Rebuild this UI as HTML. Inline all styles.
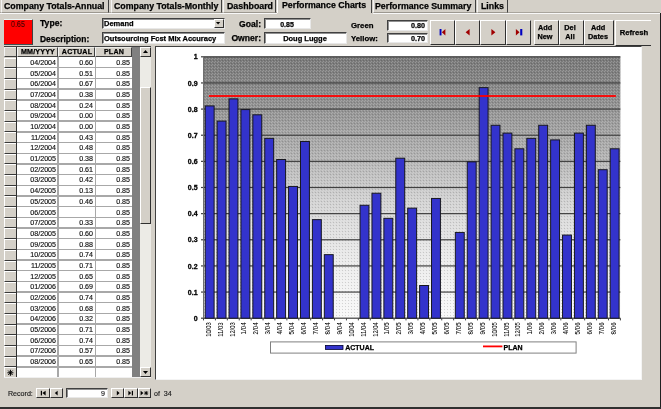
<!DOCTYPE html><html><head><meta charset="utf-8"><style>
*{margin:0;padding:0;box-sizing:border-box}
html,body{width:661px;height:409px;overflow:hidden;background:#d4d0c8;font-family:"Liberation Sans", sans-serif;position:relative}
.a{position:absolute}
.t{position:absolute;white-space:nowrap;line-height:1;will-change:transform}
.b{font-weight:bold;-webkit-text-stroke:0.25px currentColor}
.n{-webkit-text-stroke:0.15px currentColor}
</style></head><body>

<div class="a" style="left:0px;top:13.0px;width:659.5px;height:1px;background:#f8f8f8"></div>
<div class="a" style="left:0px;top:12.2px;width:659.5px;height:0.8px;background:#a8a49c"></div>
<div class="a" style="left:1px;top:0px;width:108px;height:13.0px;background:#d4d0c8;border-left:1px solid #f4f4f4;border-right:1.3px solid #404040;border-bottom:1px solid #9c9890"></div>
<div class="t b" style="left:3.7px;top:2.3px;font-size:8.8px;color:#000;">Company Totals-Annual</div>
<div class="a" style="left:110.5px;top:0px;width:111.0px;height:13.0px;background:#d4d0c8;border-left:1px solid #f4f4f4;border-right:1.3px solid #404040;border-bottom:1px solid #9c9890"></div>
<div class="t b" style="left:113.6px;top:2.3px;font-size:8.8px;color:#000;">Company Totals-Monthly</div>
<div class="a" style="left:223px;top:0px;width:53px;height:13.0px;background:#d4d0c8;border-left:1px solid #f4f4f4;border-right:1.3px solid #404040;border-bottom:1px solid #9c9890"></div>
<div class="t b" style="left:226.7px;top:2.3px;font-size:8.8px;color:#000;">Dashboard</div>
<div class="a" style="left:276.5px;top:0px;width:96.0px;height:14.0px;background:#d4d0c8"></div>
<div class="a" style="left:276.5px;top:0px;width:1px;height:13px;background:#fff"></div>
<div class="a" style="left:371.3px;top:0px;width:1.2px;height:13px;background:#404040"></div>
<div class="t b" style="left:281.8px;top:1.2px;font-size:8.8px;color:#000;">Performance Charts</div>
<div class="a" style="left:372.5px;top:0px;width:103.5px;height:13.0px;background:#d4d0c8;border-left:1px solid #f4f4f4;border-right:1.3px solid #404040;border-bottom:1px solid #9c9890"></div>
<div class="t b" style="left:375.1px;top:2.3px;font-size:8.8px;color:#000;">Performance Summary</div>
<div class="a" style="left:477px;top:0px;width:31px;height:13.0px;background:#d4d0c8;border-left:1px solid #f4f4f4;border-right:1.3px solid #404040;border-bottom:1px solid #9c9890"></div>
<div class="t b" style="left:480.7px;top:2.3px;font-size:8.8px;color:#000;">Links</div>
<div class="a" style="left:659.5px;top:13px;width:1.5px;height:396px;background:#202020"></div>
<div class="a" style="left:0px;top:406.8px;width:661px;height:2.2px;background:#303030"></div>
<div class="a" style="left:3.5px;top:19px;width:29.5px;height:25.5px;background:#ff0000;border-top:1px solid #e8f4f4;border-right:1.5px solid #404040;border-bottom:1px solid #405050"></div>
<div class="t n" style="left:-82.1px;width:200px;text-align:center;top:19.2px;font-size:9.8px;color:#400000;transform:scaleX(0.73);transform-origin:100px 0">0.65</div>
<div class="t b" style="left:40px;top:19.4px;font-size:8.6px;color:#000;">Type:</div>
<div class="t b" style="left:40px;top:34.7px;font-size:8.45px;color:#000;">Description:</div>
<div class="a" style="left:102px;top:18px;width:122.5px;height:10.5px;background:#fff;border-top:1px solid #404040;border-left:1px solid #404040;border-right:1px solid #e8e8e8;border-bottom:1px solid #e8e8e8;box-shadow:inset 1px 1px 0 #909090"></div>
<div class="a" style="left:213.7px;top:19px;width:10.3px;height:9px;background:#d4d0c8;border-top:1px solid #fff;border-left:1px solid #fff;border-right:1.2px solid #303030;border-bottom:1.2px solid #303030"></div>
<svg class="a" style="left:216.4px;top:21.8px" width="5" height="3"><polygon points="0,0 4.2,0 2.1,2.4" fill="#000"/></svg>
<div class="t b" style="left:103.6px;top:20.4px;font-size:7.5px;color:#000;">Demand</div>
<div class="a" style="left:102px;top:32px;width:122.5px;height:11.5px;background:#fff;border-top:1px solid #404040;border-left:1px solid #404040;border-right:1px solid #e8e8e8;border-bottom:1px solid #e8e8e8;box-shadow:inset 1px 1px 0 #909090"></div>
<div class="t b" style="left:103.5px;top:34.8px;font-size:7.5px;color:#000;">Outsourcing Fcst Mix Accuracy</div>
<div class="t b" style="left:61.30000000000001px;width:200px;text-align:right;top:20.3px;font-size:8.6px;color:#000;">Goal:</div>
<div class="t b" style="left:61.30000000000001px;width:200px;text-align:right;top:34.3px;font-size:8.6px;color:#000;">Owner:</div>
<div class="a" style="left:264px;top:18px;width:47px;height:11.4px;background:#fff;border-top:1px solid #404040;border-left:1px solid #404040;border-right:1px solid #e8e8e8;border-bottom:1px solid #e8e8e8;box-shadow:inset 1px 1px 0 #909090"></div>
<div class="t b" style="left:187.3px;width:200px;text-align:center;top:21.0px;font-size:7px;color:#000;">0.85</div>
<div class="a" style="left:264px;top:32px;width:83px;height:12px;background:#fff;border-top:1px solid #404040;border-left:1px solid #404040;border-right:1px solid #e8e8e8;border-bottom:1px solid #e8e8e8;box-shadow:inset 1px 1px 0 #909090"></div>
<div class="t b" style="left:204.8px;width:200px;text-align:center;top:34.8px;font-size:7.5px;color:#000;">Doug Lugge</div>
<div class="t b" style="left:350.9px;top:22.0px;font-size:7.8px;color:#000;">Green</div>
<div class="t b" style="left:350.9px;top:34.8px;font-size:7.8px;color:#000;">Yellow:</div>
<div class="a" style="left:387px;top:20px;width:40.6px;height:10.6px;background:#fff;border-top:1px solid #404040;border-left:1px solid #404040;border-right:1px solid #e8e8e8;border-bottom:1px solid #e8e8e8;box-shadow:inset 1px 1px 0 #909090"></div>
<div class="t b" style="left:224.8px;width:200px;text-align:right;top:21.6px;font-size:7.2px;color:#000;">0.80</div>
<div class="a" style="left:387px;top:33.4px;width:40.6px;height:10.1px;background:#fff;border-top:1px solid #404040;border-left:1px solid #404040;border-right:1px solid #e8e8e8;border-bottom:1px solid #e8e8e8;box-shadow:inset 1px 1px 0 #909090"></div>
<div class="t b" style="left:224.8px;width:200px;text-align:right;top:34.5px;font-size:7.2px;color:#000;">0.70</div>
<div class="a" style="left:430px;top:20px;width:24.5px;height:24.5px;background:#d4d0c8;border-top:1px solid #fff;border-left:1px solid #fff;border-right:1.3px solid #303030;border-bottom:1.3px solid #303030"></div>
<div class="a" style="left:454.5px;top:20px;width:25.5px;height:24.5px;background:#d4d0c8;border-top:1px solid #fff;border-left:1px solid #fff;border-right:1.3px solid #303030;border-bottom:1.3px solid #303030"></div>
<div class="a" style="left:480px;top:20px;width:25.5px;height:24.5px;background:#d4d0c8;border-top:1px solid #fff;border-left:1px solid #fff;border-right:1.3px solid #303030;border-bottom:1.3px solid #303030"></div>
<div class="a" style="left:505.5px;top:20px;width:25.200000000000045px;height:24.5px;background:#d4d0c8;border-top:1px solid #fff;border-left:1px solid #fff;border-right:1.3px solid #303030;border-bottom:1.3px solid #303030"></div>
<svg class="a" style="left:430px;top:20px" width="101" height="25"><rect x="9.6" y="9" width="1.9" height="6.4" fill="#0000c0"/><polygon points="11.8,12.2 15.4,9 15.4,15.4" fill="#a00000"/><polygon points="35.6,12.2 39.6,9 39.6,15.4" fill="#a00000"/><polygon points="65.4,12.2 61.4,9 61.4,15.4" fill="#a00000"/><polygon points="89.5,12.2 85.9,9 85.9,15.4" fill="#a00000"/><rect x="90.2" y="9" width="2.1" height="6.4" fill="#0000c0"/></svg>
<div class="a" style="left:533.5px;top:20px;width:25.0px;height:24.5px;background:#d4d0c8;border-top:1px solid #fff;border-left:1px solid #fff;border-right:1.3px solid #303030;border-bottom:1.3px solid #303030"></div>
<div class="t b" style="left:445.1px;width:200px;text-align:center;top:24.0px;font-size:7.3px;color:#000;">Add</div>
<div class="t b" style="left:445.1px;width:200px;text-align:center;top:33.4px;font-size:7.3px;color:#000;">New</div>
<div class="a" style="left:558.5px;top:20px;width:25.5px;height:24.5px;background:#d4d0c8;border-top:1px solid #fff;border-left:1px solid #fff;border-right:1.3px solid #303030;border-bottom:1.3px solid #303030"></div>
<div class="t b" style="left:470.35px;width:200px;text-align:center;top:24.0px;font-size:7.3px;color:#000;">Del</div>
<div class="t b" style="left:470.35px;width:200px;text-align:center;top:33.4px;font-size:7.3px;color:#000;">All</div>
<div class="a" style="left:584px;top:20px;width:29.5px;height:24.5px;background:#d4d0c8;border-top:1px solid #fff;border-left:1px solid #fff;border-right:1.3px solid #303030;border-bottom:1.3px solid #303030"></div>
<div class="t b" style="left:497.85px;width:200px;text-align:center;top:24.0px;font-size:7.3px;color:#000;">Add</div>
<div class="t b" style="left:497.85px;width:200px;text-align:center;top:33.4px;font-size:7.3px;color:#000;">Dates</div>
<div class="a" style="left:615px;top:20px;width:36.2px;height:25.5px;background:#d4d0c8;border-top:1px solid #fff;border-left:1px solid #fff;border-bottom:1.3px solid #303030"></div>
<div class="t b" style="left:533.5px;width:200px;text-align:center;top:28.8px;font-size:7.7px;color:#000;">Refresh</div>
<div class="a" style="left:4px;top:46.8px;width:136px;height:330.59999999999997px;background:#fff"></div>
<div class="a" style="left:132px;top:46.8px;width:8px;height:330.59999999999997px;background:#808080"></div>
<div class="a" style="left:4px;top:46.0px;width:147px;height:1.0px;background:#404040"></div>
<div class="a" style="left:4px;top:46.8px;width:13px;height:330.59999999999997px;background:#d4d0c8"></div>
<div class="a" style="left:16.2px;top:46.8px;width:1.0px;height:330.59999999999997px;background:#303030"></div>
<div class="a" style="left:17.2px;top:47.0px;width:40.400000000000006px;height:10.0px;background:#d4d0c8;border-left:1px solid #f4f4f4;border-top:1px solid #ecece8;border-right:1.1px solid #404040;border-bottom:1.1px solid #404040"></div>
<div class="t b" style="left:-62.300000000000004px;width:200px;text-align:center;top:48.5px;font-size:7.1px;color:#000;letter-spacing:0.2px">MM/YYYY</div>
<div class="a" style="left:57.6px;top:47.0px;width:37.6px;height:10.0px;background:#d4d0c8;border-left:1px solid #f4f4f4;border-top:1px solid #ecece8;border-right:1.1px solid #404040;border-bottom:1.1px solid #404040"></div>
<div class="t b" style="left:-23.299999999999997px;width:200px;text-align:center;top:48.5px;font-size:7.1px;color:#000;letter-spacing:0.2px">ACTUAL</div>
<div class="a" style="left:95.2px;top:47.0px;width:36.8px;height:10.0px;background:#d4d0c8;border-left:1px solid #f4f4f4;border-top:1px solid #ecece8;border-right:1.1px solid #404040;border-bottom:1.1px solid #404040"></div>
<div class="t b" style="left:13.899999999999991px;width:200px;text-align:center;top:48.5px;font-size:7.1px;color:#000;letter-spacing:0.2px">PLAN</div>
<div class="a" style="left:4px;top:47.0px;width:12.2px;height:10.0px;background:#d4d0c8;border-left:1px solid #f4f4f4;border-top:1px solid #ecece8;border-bottom:1.1px solid #404040"></div>
<div class="a" style="left:4px;top:57.6px;width:12.3px;height:10.68px;background:#d4d0c8;border-top:1px solid #fff;border-left:1px solid #fff;border-bottom:1.2px solid #383838"></div>
<div class="a" style="left:17.2px;top:67.08000000000001px;width:114.8px;height:1.4px;background:#a8a8a8"></div>
<div class="t n" style="left:-144.2px;width:200px;text-align:right;top:60.0px;font-size:7.1px;color:#101010;">04/2004</div>
<div class="t n" style="left:-106.7px;width:200px;text-align:right;top:60.0px;font-size:7.1px;color:#101010;">0.60</div>
<div class="t n" style="left:-69.69999999999999px;width:200px;text-align:right;top:60.0px;font-size:7.1px;color:#101010;">0.85</div>
<div class="a" style="left:4px;top:68.28px;width:12.3px;height:10.68px;background:#d4d0c8;border-top:1px solid #fff;border-left:1px solid #fff;border-bottom:1.2px solid #383838"></div>
<div class="a" style="left:17.2px;top:77.76000000000002px;width:114.8px;height:1.4px;background:#a8a8a8"></div>
<div class="t n" style="left:-144.2px;width:200px;text-align:right;top:70.68px;font-size:7.1px;color:#101010;">05/2004</div>
<div class="t n" style="left:-106.7px;width:200px;text-align:right;top:70.68px;font-size:7.1px;color:#101010;">0.51</div>
<div class="t n" style="left:-69.69999999999999px;width:200px;text-align:right;top:70.68px;font-size:7.1px;color:#101010;">0.85</div>
<div class="a" style="left:4px;top:78.96px;width:12.3px;height:10.68px;background:#d4d0c8;border-top:1px solid #fff;border-left:1px solid #fff;border-bottom:1.2px solid #383838"></div>
<div class="a" style="left:17.2px;top:88.44px;width:114.8px;height:1.4px;background:#a8a8a8"></div>
<div class="t n" style="left:-144.2px;width:200px;text-align:right;top:81.36px;font-size:7.1px;color:#101010;">06/2004</div>
<div class="t n" style="left:-106.7px;width:200px;text-align:right;top:81.36px;font-size:7.1px;color:#101010;">0.67</div>
<div class="t n" style="left:-69.69999999999999px;width:200px;text-align:right;top:81.36px;font-size:7.1px;color:#101010;">0.85</div>
<div class="a" style="left:4px;top:89.63999999999999px;width:12.3px;height:10.68px;background:#d4d0c8;border-top:1px solid #fff;border-left:1px solid #fff;border-bottom:1.2px solid #383838"></div>
<div class="a" style="left:17.2px;top:99.12px;width:114.8px;height:1.4px;background:#a8a8a8"></div>
<div class="t n" style="left:-144.2px;width:200px;text-align:right;top:92.03999999999999px;font-size:7.1px;color:#101010;">07/2004</div>
<div class="t n" style="left:-106.7px;width:200px;text-align:right;top:92.03999999999999px;font-size:7.1px;color:#101010;">0.38</div>
<div class="t n" style="left:-69.69999999999999px;width:200px;text-align:right;top:92.03999999999999px;font-size:7.1px;color:#101010;">0.85</div>
<div class="a" style="left:4px;top:100.32px;width:12.3px;height:10.68px;background:#d4d0c8;border-top:1px solid #fff;border-left:1px solid #fff;border-bottom:1.2px solid #383838"></div>
<div class="a" style="left:17.2px;top:109.80000000000001px;width:114.8px;height:1.4px;background:#a8a8a8"></div>
<div class="t n" style="left:-144.2px;width:200px;text-align:right;top:102.72px;font-size:7.1px;color:#101010;">08/2004</div>
<div class="t n" style="left:-106.7px;width:200px;text-align:right;top:102.72px;font-size:7.1px;color:#101010;">0.24</div>
<div class="t n" style="left:-69.69999999999999px;width:200px;text-align:right;top:102.72px;font-size:7.1px;color:#101010;">0.85</div>
<div class="a" style="left:4px;top:111.0px;width:12.3px;height:10.68px;background:#d4d0c8;border-top:1px solid #fff;border-left:1px solid #fff;border-bottom:1.2px solid #383838"></div>
<div class="a" style="left:17.2px;top:120.48000000000002px;width:114.8px;height:1.4px;background:#a8a8a8"></div>
<div class="t n" style="left:-144.2px;width:200px;text-align:right;top:113.4px;font-size:7.1px;color:#101010;">09/2004</div>
<div class="t n" style="left:-106.7px;width:200px;text-align:right;top:113.4px;font-size:7.1px;color:#101010;">0.00</div>
<div class="t n" style="left:-69.69999999999999px;width:200px;text-align:right;top:113.4px;font-size:7.1px;color:#101010;">0.85</div>
<div class="a" style="left:4px;top:121.67999999999999px;width:12.3px;height:10.68px;background:#d4d0c8;border-top:1px solid #fff;border-left:1px solid #fff;border-bottom:1.2px solid #383838"></div>
<div class="a" style="left:17.2px;top:131.16px;width:114.8px;height:1.4px;background:#a8a8a8"></div>
<div class="t n" style="left:-144.2px;width:200px;text-align:right;top:124.08px;font-size:7.1px;color:#101010;">10/2004</div>
<div class="t n" style="left:-106.7px;width:200px;text-align:right;top:124.08px;font-size:7.1px;color:#101010;">0.00</div>
<div class="t n" style="left:-69.69999999999999px;width:200px;text-align:right;top:124.08px;font-size:7.1px;color:#101010;">0.85</div>
<div class="a" style="left:4px;top:132.35999999999999px;width:12.3px;height:10.68px;background:#d4d0c8;border-top:1px solid #fff;border-left:1px solid #fff;border-bottom:1.2px solid #383838"></div>
<div class="a" style="left:17.2px;top:141.84px;width:114.8px;height:1.4px;background:#a8a8a8"></div>
<div class="t n" style="left:-144.2px;width:200px;text-align:right;top:134.76px;font-size:7.1px;color:#101010;">11/2004</div>
<div class="t n" style="left:-106.7px;width:200px;text-align:right;top:134.76px;font-size:7.1px;color:#101010;">0.43</div>
<div class="t n" style="left:-69.69999999999999px;width:200px;text-align:right;top:134.76px;font-size:7.1px;color:#101010;">0.85</div>
<div class="a" style="left:4px;top:143.04px;width:12.3px;height:10.68px;background:#d4d0c8;border-top:1px solid #fff;border-left:1px solid #fff;border-bottom:1.2px solid #383838"></div>
<div class="a" style="left:17.2px;top:152.52px;width:114.8px;height:1.4px;background:#a8a8a8"></div>
<div class="t n" style="left:-144.2px;width:200px;text-align:right;top:145.44px;font-size:7.1px;color:#101010;">12/2004</div>
<div class="t n" style="left:-106.7px;width:200px;text-align:right;top:145.44px;font-size:7.1px;color:#101010;">0.48</div>
<div class="t n" style="left:-69.69999999999999px;width:200px;text-align:right;top:145.44px;font-size:7.1px;color:#101010;">0.85</div>
<div class="a" style="left:4px;top:153.72px;width:12.3px;height:10.68px;background:#d4d0c8;border-top:1px solid #fff;border-left:1px solid #fff;border-bottom:1.2px solid #383838"></div>
<div class="a" style="left:17.2px;top:163.20000000000002px;width:114.8px;height:1.4px;background:#a8a8a8"></div>
<div class="t n" style="left:-144.2px;width:200px;text-align:right;top:156.12px;font-size:7.1px;color:#101010;">01/2005</div>
<div class="t n" style="left:-106.7px;width:200px;text-align:right;top:156.12px;font-size:7.1px;color:#101010;">0.38</div>
<div class="t n" style="left:-69.69999999999999px;width:200px;text-align:right;top:156.12px;font-size:7.1px;color:#101010;">0.85</div>
<div class="a" style="left:4px;top:164.4px;width:12.3px;height:10.68px;background:#d4d0c8;border-top:1px solid #fff;border-left:1px solid #fff;border-bottom:1.2px solid #383838"></div>
<div class="a" style="left:17.2px;top:173.88000000000002px;width:114.8px;height:1.4px;background:#a8a8a8"></div>
<div class="t n" style="left:-144.2px;width:200px;text-align:right;top:166.8px;font-size:7.1px;color:#101010;">02/2005</div>
<div class="t n" style="left:-106.7px;width:200px;text-align:right;top:166.8px;font-size:7.1px;color:#101010;">0.61</div>
<div class="t n" style="left:-69.69999999999999px;width:200px;text-align:right;top:166.8px;font-size:7.1px;color:#101010;">0.85</div>
<div class="a" style="left:4px;top:175.07999999999998px;width:12.3px;height:10.68px;background:#d4d0c8;border-top:1px solid #fff;border-left:1px solid #fff;border-bottom:1.2px solid #383838"></div>
<div class="a" style="left:17.2px;top:184.56px;width:114.8px;height:1.4px;background:#a8a8a8"></div>
<div class="t n" style="left:-144.2px;width:200px;text-align:right;top:177.48px;font-size:7.1px;color:#101010;">03/2005</div>
<div class="t n" style="left:-106.7px;width:200px;text-align:right;top:177.48px;font-size:7.1px;color:#101010;">0.42</div>
<div class="t n" style="left:-69.69999999999999px;width:200px;text-align:right;top:177.48px;font-size:7.1px;color:#101010;">0.85</div>
<div class="a" style="left:4px;top:185.76px;width:12.3px;height:10.68px;background:#d4d0c8;border-top:1px solid #fff;border-left:1px solid #fff;border-bottom:1.2px solid #383838"></div>
<div class="a" style="left:17.2px;top:195.24px;width:114.8px;height:1.4px;background:#a8a8a8"></div>
<div class="t n" style="left:-144.2px;width:200px;text-align:right;top:188.16px;font-size:7.1px;color:#101010;">04/2005</div>
<div class="t n" style="left:-106.7px;width:200px;text-align:right;top:188.16px;font-size:7.1px;color:#101010;">0.13</div>
<div class="t n" style="left:-69.69999999999999px;width:200px;text-align:right;top:188.16px;font-size:7.1px;color:#101010;">0.85</div>
<div class="a" style="left:4px;top:196.44px;width:12.3px;height:10.68px;background:#d4d0c8;border-top:1px solid #fff;border-left:1px solid #fff;border-bottom:1.2px solid #383838"></div>
<div class="a" style="left:17.2px;top:205.92000000000002px;width:114.8px;height:1.4px;background:#a8a8a8"></div>
<div class="t n" style="left:-144.2px;width:200px;text-align:right;top:198.84px;font-size:7.1px;color:#101010;">05/2005</div>
<div class="t n" style="left:-106.7px;width:200px;text-align:right;top:198.84px;font-size:7.1px;color:#101010;">0.46</div>
<div class="t n" style="left:-69.69999999999999px;width:200px;text-align:right;top:198.84px;font-size:7.1px;color:#101010;">0.85</div>
<div class="a" style="left:4px;top:207.11999999999998px;width:12.3px;height:10.68px;background:#d4d0c8;border-top:1px solid #fff;border-left:1px solid #fff;border-bottom:1.2px solid #383838"></div>
<div class="a" style="left:17.2px;top:216.6px;width:114.8px;height:1.4px;background:#a8a8a8"></div>
<div class="t n" style="left:-144.2px;width:200px;text-align:right;top:209.51999999999998px;font-size:7.1px;color:#101010;">06/2005</div>
<div class="t n" style="left:-69.69999999999999px;width:200px;text-align:right;top:209.51999999999998px;font-size:7.1px;color:#101010;">0.85</div>
<div class="a" style="left:4px;top:217.79999999999998px;width:12.3px;height:10.68px;background:#d4d0c8;border-top:1px solid #fff;border-left:1px solid #fff;border-bottom:1.2px solid #383838"></div>
<div class="a" style="left:17.2px;top:227.28px;width:114.8px;height:1.4px;background:#a8a8a8"></div>
<div class="t n" style="left:-144.2px;width:200px;text-align:right;top:220.2px;font-size:7.1px;color:#101010;">07/2005</div>
<div class="t n" style="left:-106.7px;width:200px;text-align:right;top:220.2px;font-size:7.1px;color:#101010;">0.33</div>
<div class="t n" style="left:-69.69999999999999px;width:200px;text-align:right;top:220.2px;font-size:7.1px;color:#101010;">0.85</div>
<div class="a" style="left:4px;top:228.48px;width:12.3px;height:10.68px;background:#d4d0c8;border-top:1px solid #fff;border-left:1px solid #fff;border-bottom:1.2px solid #383838"></div>
<div class="a" style="left:17.2px;top:237.96px;width:114.8px;height:1.4px;background:#a8a8a8"></div>
<div class="t n" style="left:-144.2px;width:200px;text-align:right;top:230.88px;font-size:7.1px;color:#101010;">08/2005</div>
<div class="t n" style="left:-106.7px;width:200px;text-align:right;top:230.88px;font-size:7.1px;color:#101010;">0.60</div>
<div class="t n" style="left:-69.69999999999999px;width:200px;text-align:right;top:230.88px;font-size:7.1px;color:#101010;">0.85</div>
<div class="a" style="left:4px;top:239.16px;width:12.3px;height:10.68px;background:#d4d0c8;border-top:1px solid #fff;border-left:1px solid #fff;border-bottom:1.2px solid #383838"></div>
<div class="a" style="left:17.2px;top:248.64000000000001px;width:114.8px;height:1.4px;background:#a8a8a8"></div>
<div class="t n" style="left:-144.2px;width:200px;text-align:right;top:241.56px;font-size:7.1px;color:#101010;">09/2005</div>
<div class="t n" style="left:-106.7px;width:200px;text-align:right;top:241.56px;font-size:7.1px;color:#101010;">0.88</div>
<div class="t n" style="left:-69.69999999999999px;width:200px;text-align:right;top:241.56px;font-size:7.1px;color:#101010;">0.85</div>
<div class="a" style="left:4px;top:249.84px;width:12.3px;height:10.68px;background:#d4d0c8;border-top:1px solid #fff;border-left:1px solid #fff;border-bottom:1.2px solid #383838"></div>
<div class="a" style="left:17.2px;top:259.32px;width:114.8px;height:1.4px;background:#a8a8a8"></div>
<div class="t n" style="left:-144.2px;width:200px;text-align:right;top:252.24px;font-size:7.1px;color:#101010;">10/2005</div>
<div class="t n" style="left:-106.7px;width:200px;text-align:right;top:252.24px;font-size:7.1px;color:#101010;">0.74</div>
<div class="t n" style="left:-69.69999999999999px;width:200px;text-align:right;top:252.24px;font-size:7.1px;color:#101010;">0.85</div>
<div class="a" style="left:4px;top:260.52px;width:12.3px;height:10.68px;background:#d4d0c8;border-top:1px solid #fff;border-left:1px solid #fff;border-bottom:1.2px solid #383838"></div>
<div class="a" style="left:17.2px;top:269.99999999999994px;width:114.8px;height:1.4px;background:#a8a8a8"></div>
<div class="t n" style="left:-144.2px;width:200px;text-align:right;top:262.91999999999996px;font-size:7.1px;color:#101010;">11/2005</div>
<div class="t n" style="left:-106.7px;width:200px;text-align:right;top:262.91999999999996px;font-size:7.1px;color:#101010;">0.71</div>
<div class="t n" style="left:-69.69999999999999px;width:200px;text-align:right;top:262.91999999999996px;font-size:7.1px;color:#101010;">0.85</div>
<div class="a" style="left:4px;top:271.20000000000005px;width:12.3px;height:10.68px;background:#d4d0c8;border-top:1px solid #fff;border-left:1px solid #fff;border-bottom:1.2px solid #383838"></div>
<div class="a" style="left:17.2px;top:280.68px;width:114.8px;height:1.4px;background:#a8a8a8"></div>
<div class="t n" style="left:-144.2px;width:200px;text-align:right;top:273.6px;font-size:7.1px;color:#101010;">12/2005</div>
<div class="t n" style="left:-106.7px;width:200px;text-align:right;top:273.6px;font-size:7.1px;color:#101010;">0.65</div>
<div class="t n" style="left:-69.69999999999999px;width:200px;text-align:right;top:273.6px;font-size:7.1px;color:#101010;">0.85</div>
<div class="a" style="left:4px;top:281.88px;width:12.3px;height:10.68px;background:#d4d0c8;border-top:1px solid #fff;border-left:1px solid #fff;border-bottom:1.2px solid #383838"></div>
<div class="a" style="left:17.2px;top:291.35999999999996px;width:114.8px;height:1.4px;background:#a8a8a8"></div>
<div class="t n" style="left:-144.2px;width:200px;text-align:right;top:284.28px;font-size:7.1px;color:#101010;">01/2006</div>
<div class="t n" style="left:-106.7px;width:200px;text-align:right;top:284.28px;font-size:7.1px;color:#101010;">0.69</div>
<div class="t n" style="left:-69.69999999999999px;width:200px;text-align:right;top:284.28px;font-size:7.1px;color:#101010;">0.85</div>
<div class="a" style="left:4px;top:292.56px;width:12.3px;height:10.68px;background:#d4d0c8;border-top:1px solid #fff;border-left:1px solid #fff;border-bottom:1.2px solid #383838"></div>
<div class="a" style="left:17.2px;top:302.03999999999996px;width:114.8px;height:1.4px;background:#a8a8a8"></div>
<div class="t n" style="left:-144.2px;width:200px;text-align:right;top:294.96px;font-size:7.1px;color:#101010;">02/2006</div>
<div class="t n" style="left:-106.7px;width:200px;text-align:right;top:294.96px;font-size:7.1px;color:#101010;">0.74</div>
<div class="t n" style="left:-69.69999999999999px;width:200px;text-align:right;top:294.96px;font-size:7.1px;color:#101010;">0.85</div>
<div class="a" style="left:4px;top:303.24px;width:12.3px;height:10.68px;background:#d4d0c8;border-top:1px solid #fff;border-left:1px solid #fff;border-bottom:1.2px solid #383838"></div>
<div class="a" style="left:17.2px;top:312.71999999999997px;width:114.8px;height:1.4px;background:#a8a8a8"></div>
<div class="t n" style="left:-144.2px;width:200px;text-align:right;top:305.64px;font-size:7.1px;color:#101010;">03/2006</div>
<div class="t n" style="left:-106.7px;width:200px;text-align:right;top:305.64px;font-size:7.1px;color:#101010;">0.68</div>
<div class="t n" style="left:-69.69999999999999px;width:200px;text-align:right;top:305.64px;font-size:7.1px;color:#101010;">0.85</div>
<div class="a" style="left:4px;top:313.92px;width:12.3px;height:10.68px;background:#d4d0c8;border-top:1px solid #fff;border-left:1px solid #fff;border-bottom:1.2px solid #383838"></div>
<div class="a" style="left:17.2px;top:323.4px;width:114.8px;height:1.4px;background:#a8a8a8"></div>
<div class="t n" style="left:-144.2px;width:200px;text-align:right;top:316.32px;font-size:7.1px;color:#101010;">04/2006</div>
<div class="t n" style="left:-106.7px;width:200px;text-align:right;top:316.32px;font-size:7.1px;color:#101010;">0.32</div>
<div class="t n" style="left:-69.69999999999999px;width:200px;text-align:right;top:316.32px;font-size:7.1px;color:#101010;">0.85</div>
<div class="a" style="left:4px;top:324.6px;width:12.3px;height:10.68px;background:#d4d0c8;border-top:1px solid #fff;border-left:1px solid #fff;border-bottom:1.2px solid #383838"></div>
<div class="a" style="left:17.2px;top:334.08px;width:114.8px;height:1.4px;background:#a8a8a8"></div>
<div class="t n" style="left:-144.2px;width:200px;text-align:right;top:327.0px;font-size:7.1px;color:#101010;">05/2006</div>
<div class="t n" style="left:-106.7px;width:200px;text-align:right;top:327.0px;font-size:7.1px;color:#101010;">0.71</div>
<div class="t n" style="left:-69.69999999999999px;width:200px;text-align:right;top:327.0px;font-size:7.1px;color:#101010;">0.85</div>
<div class="a" style="left:4px;top:335.28000000000003px;width:12.3px;height:10.68px;background:#d4d0c8;border-top:1px solid #fff;border-left:1px solid #fff;border-bottom:1.2px solid #383838"></div>
<div class="a" style="left:17.2px;top:344.76px;width:114.8px;height:1.4px;background:#a8a8a8"></div>
<div class="t n" style="left:-144.2px;width:200px;text-align:right;top:337.68px;font-size:7.1px;color:#101010;">06/2006</div>
<div class="t n" style="left:-106.7px;width:200px;text-align:right;top:337.68px;font-size:7.1px;color:#101010;">0.74</div>
<div class="t n" style="left:-69.69999999999999px;width:200px;text-align:right;top:337.68px;font-size:7.1px;color:#101010;">0.85</div>
<div class="a" style="left:4px;top:345.96000000000004px;width:12.3px;height:10.68px;background:#d4d0c8;border-top:1px solid #fff;border-left:1px solid #fff;border-bottom:1.2px solid #383838"></div>
<div class="a" style="left:17.2px;top:355.44px;width:114.8px;height:1.4px;background:#a8a8a8"></div>
<div class="t n" style="left:-144.2px;width:200px;text-align:right;top:348.36px;font-size:7.1px;color:#101010;">07/2006</div>
<div class="t n" style="left:-106.7px;width:200px;text-align:right;top:348.36px;font-size:7.1px;color:#101010;">0.57</div>
<div class="t n" style="left:-69.69999999999999px;width:200px;text-align:right;top:348.36px;font-size:7.1px;color:#101010;">0.85</div>
<div class="a" style="left:4px;top:356.64px;width:12.3px;height:10.68px;background:#d4d0c8;border-top:1px solid #fff;border-left:1px solid #fff;border-bottom:1.2px solid #383838"></div>
<div class="a" style="left:17.2px;top:366.11999999999995px;width:114.8px;height:1.4px;background:#a8a8a8"></div>
<div class="t n" style="left:-144.2px;width:200px;text-align:right;top:359.03999999999996px;font-size:7.1px;color:#101010;">08/2006</div>
<div class="t n" style="left:-106.7px;width:200px;text-align:right;top:359.03999999999996px;font-size:7.1px;color:#101010;">0.65</div>
<div class="t n" style="left:-69.69999999999999px;width:200px;text-align:right;top:359.03999999999996px;font-size:7.1px;color:#101010;">0.85</div>
<div class="a" style="left:4px;top:367.32px;width:12.3px;height:10.68px;background:#d4d0c8;border-top:1px solid #fff;border-left:1px solid #fff;border-bottom:1.2px solid #383838"></div>
<div class="a" style="left:17.2px;top:376.79999999999995px;width:114.8px;height:1.4px;background:#a8a8a8"></div>
<svg class="a" style="left:6px;top:368.71999999999997px" width="9" height="8"><g stroke="#000" stroke-width="1"><line x1="4.4" y1="0.8" x2="4.4" y2="6.8"/><line x1="1.4" y1="3.8" x2="7.4" y2="3.8"/><line x1="2.2" y1="1.6" x2="6.6" y2="6"/><line x1="2.2" y1="6" x2="6.6" y2="1.6"/></g></svg>
<div class="a" style="left:57.3px;top:57.0px;width:1.3px;height:320.4px;background:#a8a8a8"></div>
<div class="a" style="left:94.8px;top:57.0px;width:1.3px;height:320.4px;background:#a8a8a8"></div>
<div class="a" style="left:140px;top:46.8px;width:10.6px;height:330.59999999999997px;background:#ecebe6"></div>
<div class="a" style="left:140px;top:47.199999999999996px;width:10.6px;height:10px;background:#d4d0c8;border-top:1px solid #fff;border-left:1px solid #fff;border-right:1.2px solid #303030;border-bottom:1.2px solid #303030"></div>
<svg class="a" style="left:143px;top:50px" width="5" height="3"><polygon points="0,3 5,3 2.5,0" fill="#000"/></svg>
<div class="a" style="left:140px;top:86.6px;width:10.6px;height:137px;background:#d4d0c8;border-top:1px solid #fff;border-left:1px solid #fff;border-right:1.2px solid #303030;border-bottom:1.2px solid #303030"></div>
<div class="a" style="left:140px;top:366.79999999999995px;width:10.6px;height:10.6px;background:#d4d0c8;border-top:1px solid #fff;border-left:1px solid #fff;border-right:1.2px solid #303030;border-bottom:1.2px solid #303030"></div>
<svg class="a" style="left:143px;top:370.79999999999995px" width="5" height="3"><polygon points="0,0 5,0 2.5,3" fill="#000"/></svg>
<div class="a" style="left:4px;top:377.4px;width:147px;height:0.8px;background:#f0f0f0"></div>
<div class="t n" style="left:7.8px;top:391.0px;font-size:7.1px;color:#202020;">Record:</div>
<div class="a" style="left:36.3px;top:388px;width:13.5px;height:10.4px;background:#d4d0c8;border-top:1px solid #fff;border-left:1px solid #fff;border-right:1.2px solid #303030;border-bottom:1.2px solid #303030"></div>
<div class="a" style="left:49.8px;top:388px;width:13.400000000000006px;height:10.4px;background:#d4d0c8;border-top:1px solid #fff;border-left:1px solid #fff;border-right:1.2px solid #303030;border-bottom:1.2px solid #303030"></div>
<div class="a" style="left:111.2px;top:388px;width:13.200000000000003px;height:10.4px;background:#d4d0c8;border-top:1px solid #fff;border-left:1px solid #fff;border-right:1.2px solid #303030;border-bottom:1.2px solid #303030"></div>
<div class="a" style="left:124.4px;top:388px;width:13.299999999999983px;height:10.4px;background:#d4d0c8;border-top:1px solid #fff;border-left:1px solid #fff;border-right:1.2px solid #303030;border-bottom:1.2px solid #303030"></div>
<div class="a" style="left:137.7px;top:388px;width:13.100000000000023px;height:10.4px;background:#d4d0c8;border-top:1px solid #fff;border-left:1px solid #fff;border-right:1.2px solid #303030;border-bottom:1.2px solid #303030"></div>
<svg class="a" style="left:0px;top:388px" width="160" height="11"><rect x="40.8" y="2.8" width="1.2" height="4.6" fill="#000"/><polygon points="42.4,5.1 45.6,2.8 45.6,7.4" fill="#000"/><polygon points="54.8,5.1 57.6,2.8 57.6,7.4" fill="#000"/><polygon points="119.6,5.1 116.8,2.8 116.8,7.4" fill="#000"/><polygon points="131.2,5.1 128.4,2.8 128.4,7.4" fill="#000"/><rect x="131.8" y="2.8" width="1.2" height="4.6" fill="#000"/><polygon points="143.4,5.1 140.6,2.8 140.6,7.4" fill="#000"/><g stroke="#000" stroke-width="0.9"><line x1="146.2" y1="3" x2="146.2" y2="7.2"/><line x1="144.2" y1="5.1" x2="148.2" y2="5.1"/><line x1="144.8" y1="3.6" x2="147.6" y2="6.6"/><line x1="144.8" y1="6.6" x2="147.6" y2="3.6"/></g></svg>
<div class="a" style="left:66.4px;top:387.7px;width:41.8px;height:10.6px;background:#fff;border-top:1px solid #404040;border-left:1px solid #404040;border-right:1px solid #e8e8e8;border-bottom:1px solid #e8e8e8;box-shadow:inset 1px 1px 0 #909090"></div>
<div class="t n" style="left:-94.8px;width:200px;text-align:right;top:391.4px;font-size:7.1px;color:#202020;">9</div>
<div class="t n" style="left:154.4px;top:391.0px;font-size:7.1px;color:#202020;">of&nbsp;&nbsp;34</div>
<div class="a" style="left:155.2px;top:46.0px;width:486.8px;height:334.0px;background:#fff;border-top:1px solid #404040;border-left:1px solid #404040;border-right:1px solid #f4f4f4;border-bottom:1px solid #f4f4f4"></div>
<svg class="a" style="left:0;top:0;will-change:transform" width="661" height="409"><defs><linearGradient id="g" x1="0" y1="0" x2="0" y2="1"><stop offset="0.0" stop-color="#7a7a7a"/><stop offset="0.05" stop-color="#7e7e7e"/><stop offset="0.15" stop-color="#8c8c8c"/><stop offset="0.25" stop-color="#9c9c9c"/><stop offset="0.35" stop-color="#acacac"/><stop offset="0.45" stop-color="#c0c0c0"/><stop offset="0.55" stop-color="#d2d2d2"/><stop offset="0.65" stop-color="#dedede"/><stop offset="0.75" stop-color="#e8e8e8"/><stop offset="0.85" stop-color="#f0f0f0"/><stop offset="0.95" stop-color="#f6f6f6"/><stop offset="1.0" stop-color="#f8f8f8"/></linearGradient><pattern id="d" x="0" y="0" width="3" height="3" patternUnits="userSpaceOnUse"><rect x="0" y="0" width="1" height="1" fill="#000" fill-opacity="0.14"/><rect x="1" y="2" width="1" height="1" fill="#fff" fill-opacity="0.2"/><rect x="2" y="1" width="1" height="1" fill="#fff" fill-opacity="0.2"/></pattern></defs><rect x="203.5" y="56.8" width="416.9" height="261.4" fill="url(#g)"/><rect x="203.5" y="56.8" width="416.9" height="261.4" fill="url(#d)"/><rect x="201.0" y="317.59999999999997" width="419.4" height="1.2" fill="#404040"/><text x="197.6" y="320.8" font-size="7" font-weight="bold" font-family="Liberation Sans" text-anchor="end" stroke="#000" stroke-width="0.3">0</text><rect x="201.0" y="291.46" width="419.4" height="1.2" fill="#404040"/><text x="197.6" y="294.66" font-size="7" font-weight="bold" font-family="Liberation Sans" text-anchor="end" stroke="#000" stroke-width="0.3">0.1</text><rect x="201.0" y="265.31999999999994" width="419.4" height="1.2" fill="#404040"/><text x="197.6" y="268.52" font-size="7" font-weight="bold" font-family="Liberation Sans" text-anchor="end" stroke="#000" stroke-width="0.3">0.2</text><rect x="201.0" y="239.18" width="419.4" height="1.2" fill="#404040"/><text x="197.6" y="242.38" font-size="7" font-weight="bold" font-family="Liberation Sans" text-anchor="end" stroke="#000" stroke-width="0.3">0.3</text><rect x="201.0" y="213.04" width="419.4" height="1.2" fill="#404040"/><text x="197.6" y="216.23999999999998" font-size="7" font-weight="bold" font-family="Liberation Sans" text-anchor="end" stroke="#000" stroke-width="0.3">0.4</text><rect x="201.0" y="186.9" width="419.4" height="1.2" fill="#404040"/><text x="197.6" y="190.1" font-size="7" font-weight="bold" font-family="Liberation Sans" text-anchor="end" stroke="#000" stroke-width="0.3">0.5</text><rect x="201.0" y="160.76000000000002" width="419.4" height="1.2" fill="#404040"/><text x="197.6" y="163.96" font-size="7" font-weight="bold" font-family="Liberation Sans" text-anchor="end" stroke="#000" stroke-width="0.3">0.6</text><rect x="201.0" y="134.62000000000003" width="419.4" height="1.2" fill="#404040"/><text x="197.6" y="137.82000000000002" font-size="7" font-weight="bold" font-family="Liberation Sans" text-anchor="end" stroke="#000" stroke-width="0.3">0.7</text><rect x="201.0" y="108.47999999999999" width="419.4" height="1.2" fill="#404040"/><text x="197.6" y="111.67999999999998" font-size="7" font-weight="bold" font-family="Liberation Sans" text-anchor="end" stroke="#000" stroke-width="0.3">0.8</text><rect x="201.0" y="82.34" width="419.4" height="1.2" fill="#404040"/><text x="197.6" y="85.53999999999999" font-size="7" font-weight="bold" font-family="Liberation Sans" text-anchor="end" stroke="#000" stroke-width="0.3">0.9</text><rect x="201.0" y="56.20000000000001" width="419.4" height="1.2" fill="#404040"/><text x="197.6" y="59.40000000000001" font-size="7" font-weight="bold" font-family="Liberation Sans" text-anchor="end" stroke="#000" stroke-width="0.3">1</text><rect x="203.0" y="56.8" width="1.0" height="261.4" fill="#707070"/><rect x="203.0" y="318.2" width="1" height="2.2" fill="#404040"/><rect x="214.91142857142856" y="318.2" width="1" height="2.2" fill="#404040"/><rect x="226.82285714285715" y="318.2" width="1" height="2.2" fill="#404040"/><rect x="238.7342857142857" y="318.2" width="1" height="2.2" fill="#404040"/><rect x="250.6457142857143" y="318.2" width="1" height="2.2" fill="#404040"/><rect x="262.5571428571429" y="318.2" width="1" height="2.2" fill="#404040"/><rect x="274.4685714285714" y="318.2" width="1" height="2.2" fill="#404040"/><rect x="286.38" y="318.2" width="1" height="2.2" fill="#404040"/><rect x="298.2914285714286" y="318.2" width="1" height="2.2" fill="#404040"/><rect x="310.20285714285717" y="318.2" width="1" height="2.2" fill="#404040"/><rect x="322.1142857142857" y="318.2" width="1" height="2.2" fill="#404040"/><rect x="334.0257142857143" y="318.2" width="1" height="2.2" fill="#404040"/><rect x="345.9371428571428" y="318.2" width="1" height="2.2" fill="#404040"/><rect x="357.8485714285714" y="318.2" width="1" height="2.2" fill="#404040"/><rect x="369.76" y="318.2" width="1" height="2.2" fill="#404040"/><rect x="381.6714285714286" y="318.2" width="1" height="2.2" fill="#404040"/><rect x="393.58285714285716" y="318.2" width="1" height="2.2" fill="#404040"/><rect x="405.4942857142857" y="318.2" width="1" height="2.2" fill="#404040"/><rect x="417.4057142857143" y="318.2" width="1" height="2.2" fill="#404040"/><rect x="429.3171428571428" y="318.2" width="1" height="2.2" fill="#404040"/><rect x="441.2285714285714" y="318.2" width="1" height="2.2" fill="#404040"/><rect x="453.14" y="318.2" width="1" height="2.2" fill="#404040"/><rect x="465.0514285714286" y="318.2" width="1" height="2.2" fill="#404040"/><rect x="476.96285714285716" y="318.2" width="1" height="2.2" fill="#404040"/><rect x="488.8742857142857" y="318.2" width="1" height="2.2" fill="#404040"/><rect x="500.7857142857143" y="318.2" width="1" height="2.2" fill="#404040"/><rect x="512.6971428571428" y="318.2" width="1" height="2.2" fill="#404040"/><rect x="524.6085714285714" y="318.2" width="1" height="2.2" fill="#404040"/><rect x="536.52" y="318.2" width="1" height="2.2" fill="#404040"/><rect x="548.4314285714286" y="318.2" width="1" height="2.2" fill="#404040"/><rect x="560.3428571428572" y="318.2" width="1" height="2.2" fill="#404040"/><rect x="572.2542857142857" y="318.2" width="1" height="2.2" fill="#404040"/><rect x="584.1657142857143" y="318.2" width="1" height="2.2" fill="#404040"/><rect x="596.0771428571429" y="318.2" width="1" height="2.2" fill="#404040"/><rect x="607.9885714285714" y="318.2" width="1" height="2.2" fill="#404040"/><rect x="619.9" y="318.2" width="1" height="2.2" fill="#404040"/><rect x="205.2" y="105.92040000000003" width="8.911428571428571" height="212.27959999999996" fill="#3333cc" stroke="#181820" stroke-width="1"/><rect x="217.11142857142855" y="121.08160000000001" width="8.911428571428571" height="197.11839999999998" fill="#3333cc" stroke="#181820" stroke-width="1"/><rect x="229.02285714285713" y="98.86260000000001" width="8.911428571428571" height="219.33739999999997" fill="#3333cc" stroke="#181820" stroke-width="1"/><rect x="240.9342857142857" y="109.57999999999998" width="8.911428571428571" height="208.62" fill="#3333cc" stroke="#181820" stroke-width="1"/><rect x="252.84571428571428" y="114.80799999999999" width="8.911428571428571" height="203.392" fill="#3333cc" stroke="#181820" stroke-width="1"/><rect x="264.75714285714287" y="138.33400000000003" width="8.911428571428571" height="179.86599999999996" fill="#3333cc" stroke="#181820" stroke-width="1"/><rect x="276.6685714285714" y="159.50740000000002" width="8.911428571428571" height="158.69259999999997" fill="#3333cc" stroke="#181820" stroke-width="1"/><rect x="288.58" y="186.4316" width="8.911428571428571" height="131.76839999999999" fill="#3333cc" stroke="#181820" stroke-width="1"/><rect x="300.49142857142857" y="141.4708" width="8.911428571428571" height="176.7292" fill="#3333cc" stroke="#181820" stroke-width="1"/><rect x="312.40285714285716" y="219.62939999999998" width="8.911428571428571" height="98.57060000000001" fill="#3333cc" stroke="#181820" stroke-width="1"/><rect x="324.3142857142857" y="254.65699999999998" width="8.911428571428571" height="63.543000000000006" fill="#3333cc" stroke="#181820" stroke-width="1"/><rect x="360.0485714285714" y="205.2524" width="8.911428571428571" height="112.9476" fill="#3333cc" stroke="#181820" stroke-width="1"/><rect x="371.96" y="193.228" width="8.911428571428571" height="124.97199999999998" fill="#3333cc" stroke="#181820" stroke-width="1"/><rect x="383.87142857142857" y="218.32240000000002" width="8.911428571428571" height="99.87759999999997" fill="#3333cc" stroke="#181820" stroke-width="1"/><rect x="395.78285714285715" y="158.2004" width="8.911428571428571" height="159.9996" fill="#3333cc" stroke="#181820" stroke-width="1"/><rect x="407.6942857142857" y="208.1278" width="8.911428571428571" height="110.07219999999998" fill="#3333cc" stroke="#181820" stroke-width="1"/><rect x="419.60571428571427" y="285.5022" width="8.911428571428571" height="32.69779999999997" fill="#3333cc" stroke="#181820" stroke-width="1"/><rect x="431.5171428571428" y="198.456" width="8.911428571428571" height="119.744" fill="#3333cc" stroke="#181820" stroke-width="1"/><rect x="455.34" y="232.438" width="8.911428571428571" height="85.762" fill="#3333cc" stroke="#181820" stroke-width="1"/><rect x="467.25142857142856" y="161.86" width="8.911428571428571" height="156.33999999999997" fill="#3333cc" stroke="#181820" stroke-width="1"/><rect x="479.16285714285715" y="87.6224" width="8.911428571428571" height="230.5776" fill="#3333cc" stroke="#181820" stroke-width="1"/><rect x="491.0742857142857" y="125.26400000000001" width="8.911428571428571" height="192.93599999999998" fill="#3333cc" stroke="#181820" stroke-width="1"/><rect x="502.98571428571427" y="133.10600000000002" width="8.911428571428571" height="185.09399999999997" fill="#3333cc" stroke="#181820" stroke-width="1"/><rect x="514.8971428571429" y="148.79" width="8.911428571428571" height="169.41" fill="#3333cc" stroke="#181820" stroke-width="1"/><rect x="526.8085714285714" y="138.33400000000003" width="8.911428571428571" height="179.86599999999996" fill="#3333cc" stroke="#181820" stroke-width="1"/><rect x="538.72" y="125.26400000000001" width="8.911428571428571" height="192.93599999999998" fill="#3333cc" stroke="#181820" stroke-width="1"/><rect x="550.6314285714286" y="139.9024" width="8.911428571428571" height="178.2976" fill="#3333cc" stroke="#181820" stroke-width="1"/><rect x="562.5428571428572" y="235.052" width="8.911428571428571" height="83.148" fill="#3333cc" stroke="#181820" stroke-width="1"/><rect x="574.4542857142858" y="133.10600000000002" width="8.911428571428571" height="185.09399999999997" fill="#3333cc" stroke="#181820" stroke-width="1"/><rect x="586.3657142857144" y="125.26400000000001" width="8.911428571428571" height="192.93599999999998" fill="#3333cc" stroke="#181820" stroke-width="1"/><rect x="598.277142857143" y="169.70200000000003" width="8.911428571428571" height="148.49799999999996" fill="#3333cc" stroke="#181820" stroke-width="1"/><rect x="610.1885714285714" y="148.79" width="8.911428571428571" height="169.41" fill="#3333cc" stroke="#181820" stroke-width="1"/><rect x="208.9" y="95.11000000000001" width="407" height="1.8" fill="#ff0000"/><text transform="translate(210.7557142857143,322.4) rotate(-90)" font-size="8.0" font-family="Liberation Sans" text-anchor="end" fill="#000" stroke="#000" stroke-width="0.05" textLength="14.40" lengthAdjust="spacingAndGlyphs">10/03</text><text transform="translate(222.66714285714286,322.4) rotate(-90)" font-size="8.0" font-family="Liberation Sans" text-anchor="end" fill="#000" stroke="#000" stroke-width="0.05" textLength="14.40" lengthAdjust="spacingAndGlyphs">11/03</text><text transform="translate(234.57857142857145,322.4) rotate(-90)" font-size="8.0" font-family="Liberation Sans" text-anchor="end" fill="#000" stroke="#000" stroke-width="0.05" textLength="14.40" lengthAdjust="spacingAndGlyphs">12/03</text><text transform="translate(246.49,322.4) rotate(-90)" font-size="8.0" font-family="Liberation Sans" text-anchor="end" fill="#000" stroke="#000" stroke-width="0.05" textLength="12.00" lengthAdjust="spacingAndGlyphs">1/04</text><text transform="translate(258.4014285714286,322.4) rotate(-90)" font-size="8.0" font-family="Liberation Sans" text-anchor="end" fill="#000" stroke="#000" stroke-width="0.05" textLength="12.00" lengthAdjust="spacingAndGlyphs">2/04</text><text transform="translate(270.3128571428572,322.4) rotate(-90)" font-size="8.0" font-family="Liberation Sans" text-anchor="end" fill="#000" stroke="#000" stroke-width="0.05" textLength="12.00" lengthAdjust="spacingAndGlyphs">3/04</text><text transform="translate(282.2242857142857,322.4) rotate(-90)" font-size="8.0" font-family="Liberation Sans" text-anchor="end" fill="#000" stroke="#000" stroke-width="0.05" textLength="12.00" lengthAdjust="spacingAndGlyphs">4/04</text><text transform="translate(294.1357142857143,322.4) rotate(-90)" font-size="8.0" font-family="Liberation Sans" text-anchor="end" fill="#000" stroke="#000" stroke-width="0.05" textLength="12.00" lengthAdjust="spacingAndGlyphs">5/04</text><text transform="translate(306.0471428571429,322.4) rotate(-90)" font-size="8.0" font-family="Liberation Sans" text-anchor="end" fill="#000" stroke="#000" stroke-width="0.05" textLength="12.00" lengthAdjust="spacingAndGlyphs">6/04</text><text transform="translate(317.9585714285715,322.4) rotate(-90)" font-size="8.0" font-family="Liberation Sans" text-anchor="end" fill="#000" stroke="#000" stroke-width="0.05" textLength="12.00" lengthAdjust="spacingAndGlyphs">7/04</text><text transform="translate(329.87,322.4) rotate(-90)" font-size="8.0" font-family="Liberation Sans" text-anchor="end" fill="#000" stroke="#000" stroke-width="0.05" textLength="12.00" lengthAdjust="spacingAndGlyphs">8/04</text><text transform="translate(341.7814285714286,322.4) rotate(-90)" font-size="8.0" font-family="Liberation Sans" text-anchor="end" fill="#000" stroke="#000" stroke-width="0.05" textLength="12.00" lengthAdjust="spacingAndGlyphs">9/04</text><text transform="translate(353.6928571428571,322.4) rotate(-90)" font-size="8.0" font-family="Liberation Sans" text-anchor="end" fill="#000" stroke="#000" stroke-width="0.05" textLength="14.40" lengthAdjust="spacingAndGlyphs">10/04</text><text transform="translate(365.6042857142857,322.4) rotate(-90)" font-size="8.0" font-family="Liberation Sans" text-anchor="end" fill="#000" stroke="#000" stroke-width="0.05" textLength="14.40" lengthAdjust="spacingAndGlyphs">11/04</text><text transform="translate(377.5157142857143,322.4) rotate(-90)" font-size="8.0" font-family="Liberation Sans" text-anchor="end" fill="#000" stroke="#000" stroke-width="0.05" textLength="14.40" lengthAdjust="spacingAndGlyphs">12/04</text><text transform="translate(389.4271428571429,322.4) rotate(-90)" font-size="8.0" font-family="Liberation Sans" text-anchor="end" fill="#000" stroke="#000" stroke-width="0.05" textLength="12.00" lengthAdjust="spacingAndGlyphs">1/05</text><text transform="translate(401.33857142857147,322.4) rotate(-90)" font-size="8.0" font-family="Liberation Sans" text-anchor="end" fill="#000" stroke="#000" stroke-width="0.05" textLength="12.00" lengthAdjust="spacingAndGlyphs">2/05</text><text transform="translate(413.25,322.4) rotate(-90)" font-size="8.0" font-family="Liberation Sans" text-anchor="end" fill="#000" stroke="#000" stroke-width="0.05" textLength="12.00" lengthAdjust="spacingAndGlyphs">3/05</text><text transform="translate(425.1614285714286,322.4) rotate(-90)" font-size="8.0" font-family="Liberation Sans" text-anchor="end" fill="#000" stroke="#000" stroke-width="0.05" textLength="12.00" lengthAdjust="spacingAndGlyphs">4/05</text><text transform="translate(437.0728571428571,322.4) rotate(-90)" font-size="8.0" font-family="Liberation Sans" text-anchor="end" fill="#000" stroke="#000" stroke-width="0.05" textLength="12.00" lengthAdjust="spacingAndGlyphs">5/05</text><text transform="translate(448.9842857142857,322.4) rotate(-90)" font-size="8.0" font-family="Liberation Sans" text-anchor="end" fill="#000" stroke="#000" stroke-width="0.05" textLength="12.00" lengthAdjust="spacingAndGlyphs">6/05</text><text transform="translate(460.8957142857143,322.4) rotate(-90)" font-size="8.0" font-family="Liberation Sans" text-anchor="end" fill="#000" stroke="#000" stroke-width="0.05" textLength="12.00" lengthAdjust="spacingAndGlyphs">7/05</text><text transform="translate(472.8071428571429,322.4) rotate(-90)" font-size="8.0" font-family="Liberation Sans" text-anchor="end" fill="#000" stroke="#000" stroke-width="0.05" textLength="12.00" lengthAdjust="spacingAndGlyphs">8/05</text><text transform="translate(484.71857142857147,322.4) rotate(-90)" font-size="8.0" font-family="Liberation Sans" text-anchor="end" fill="#000" stroke="#000" stroke-width="0.05" textLength="12.00" lengthAdjust="spacingAndGlyphs">9/05</text><text transform="translate(496.63,322.4) rotate(-90)" font-size="8.0" font-family="Liberation Sans" text-anchor="end" fill="#000" stroke="#000" stroke-width="0.05" textLength="14.40" lengthAdjust="spacingAndGlyphs">10/05</text><text transform="translate(508.5414285714286,322.4) rotate(-90)" font-size="8.0" font-family="Liberation Sans" text-anchor="end" fill="#000" stroke="#000" stroke-width="0.05" textLength="14.40" lengthAdjust="spacingAndGlyphs">11/05</text><text transform="translate(520.452857142857,322.4) rotate(-90)" font-size="8.0" font-family="Liberation Sans" text-anchor="end" fill="#000" stroke="#000" stroke-width="0.05" textLength="14.40" lengthAdjust="spacingAndGlyphs">12/05</text><text transform="translate(532.3642857142856,322.4) rotate(-90)" font-size="8.0" font-family="Liberation Sans" text-anchor="end" fill="#000" stroke="#000" stroke-width="0.05" textLength="12.00" lengthAdjust="spacingAndGlyphs">1/06</text><text transform="translate(544.2757142857142,322.4) rotate(-90)" font-size="8.0" font-family="Liberation Sans" text-anchor="end" fill="#000" stroke="#000" stroke-width="0.05" textLength="12.00" lengthAdjust="spacingAndGlyphs">2/06</text><text transform="translate(556.1871428571428,322.4) rotate(-90)" font-size="8.0" font-family="Liberation Sans" text-anchor="end" fill="#000" stroke="#000" stroke-width="0.05" textLength="12.00" lengthAdjust="spacingAndGlyphs">3/06</text><text transform="translate(568.0985714285714,322.4) rotate(-90)" font-size="8.0" font-family="Liberation Sans" text-anchor="end" fill="#000" stroke="#000" stroke-width="0.05" textLength="12.00" lengthAdjust="spacingAndGlyphs">4/06</text><text transform="translate(580.01,322.4) rotate(-90)" font-size="8.0" font-family="Liberation Sans" text-anchor="end" fill="#000" stroke="#000" stroke-width="0.05" textLength="12.00" lengthAdjust="spacingAndGlyphs">5/06</text><text transform="translate(591.9214285714286,322.4) rotate(-90)" font-size="8.0" font-family="Liberation Sans" text-anchor="end" fill="#000" stroke="#000" stroke-width="0.05" textLength="12.00" lengthAdjust="spacingAndGlyphs">6/06</text><text transform="translate(603.8328571428572,322.4) rotate(-90)" font-size="8.0" font-family="Liberation Sans" text-anchor="end" fill="#000" stroke="#000" stroke-width="0.05" textLength="12.00" lengthAdjust="spacingAndGlyphs">7/06</text><text transform="translate(615.7442857142856,322.4) rotate(-90)" font-size="8.0" font-family="Liberation Sans" text-anchor="end" fill="#000" stroke="#000" stroke-width="0.05" textLength="12.00" lengthAdjust="spacingAndGlyphs">8/06</text><rect x="270.5" y="341.9" width="305.6" height="11.2" fill="#fff" stroke="#808080" stroke-width="1"/><rect x="325.4" y="345.4" width="17.6" height="4" fill="#3333cc" stroke="#000030" stroke-width="0.8"/><text x="345.2" y="350.4" font-size="7" font-weight="bold" font-family="Liberation Sans" stroke="#000" stroke-width="0.25">ACTUAL</text><rect x="483" y="345.5" width="19.4" height="1.8" fill="#ff0000"/><text x="503.6" y="350.4" font-size="7" font-weight="bold" font-family="Liberation Sans" stroke="#000" stroke-width="0.25">PLAN</text></svg>
</body></html>
